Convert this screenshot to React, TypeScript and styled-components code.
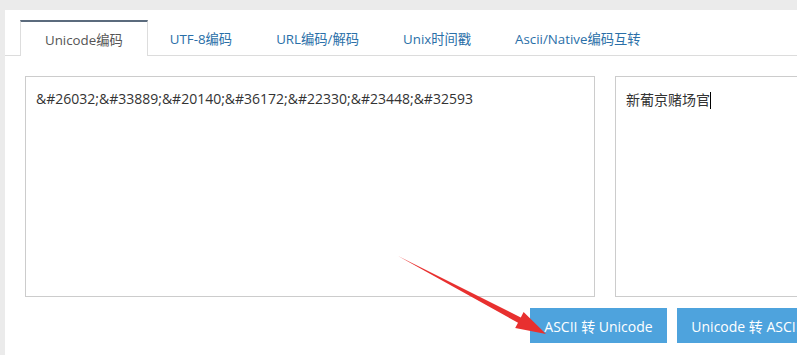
import styled, { createGlobalStyle } from "styled-components";

const GlobalStyle = createGlobalStyle`
  html, body {
    margin: 0;
    padding: 0;
    background: #ebebeb;
    overflow: hidden;
  }
  body {
    font-family: "Open Sans", "Noto Sans CJK SC", sans-serif;
  }
`

const tabs = ["Unicode编码", "UTF-8编码", "URL编码/解码", "Unix时间戳", "Ascii/Native编码互转"];

const App = () => {
  return (
    <>
      <GlobalStyle />
      <Page>
        <Panel>
          <TabBar>
            {tabs.map((t, i) => (
              <Tab key={t} active={i === 0}>{t}</Tab>
            ))}
          </TabBar>
          <Content>
            <Boxes>
              <TextBox>&amp;#26032;&amp;#33889;&amp;#20140;&amp;#36172;&amp;#22330;&amp;#23448;&amp;#32593</TextBox>
              <TextBox>新葡京赌场官<Caret /></TextBox>
            </Boxes>
            <Buttons>
              <Button>ASCII 转 Unicode</Button>
              <Button>Unicode 转 ASCII</Button>
            </Buttons>
          </Content>
        </Panel>
        <Arrow width="797" height="355" viewBox="0 0 797 355">
          <polygon
            points="398,256 520.8,317.4 523.6,312.1 546,334 515.2,328.1 518,322.8"
            fill="#e8302f"
          />
        </Arrow>
      </Page>
    </>
  )
}

export default App

const Page = styled.div`
  position: relative;
  width: 797px;
  height: 355px;
  padding: 10px 0 0 5px;
  box-sizing: border-box;
`

const Panel = styled.div`
  background: #fff;
  height: 345px;
  padding-top: 10px;
  box-sizing: border-box;
`

const TabBar = styled.div`
  display: flex;
  padding-left: 15px;
  border-bottom: 1px solid #dcdcdc;
  height: 35px;
`

const Tab = styled.div<{ active: boolean }>`
  display: flex;
  align-items: center;
  padding: 0 ${p => (p.active ? "24px" : "21px")};
  font-size: 13.3px;
  color: ${p => (p.active ? "#555" : "#2a6fa8")};
  background: #fff;
  border: 1px solid ${p => (p.active ? "#ddd" : "transparent")};
  border-top: 2px solid ${p => (p.active ? "#5b6b7d" : "transparent")};
  border-bottom: none;
  margin-bottom: ${p => (p.active ? "-1px" : "0")};
  white-space: nowrap;
`

const Content = styled.div`
  padding: 20px 0 0 20px;
`

const Boxes = styled.div`
  display: flex;
  gap: 20px;
`

const TextBox = styled.div`
  flex: none;
  width: 570px;
  height: 221px;
  box-sizing: border-box;
  border: 1px solid #ccc;
  padding: 12px 10px;
  font-size: 14px;
  color: #333;
  white-space: nowrap;
`

const Caret = styled.span`
  display: inline-block;
  width: 1px;
  height: 17px;
  background: #000;
  vertical-align: -4px;
`

const Buttons = styled.div`
  display: flex;
  gap: 10px;
  padding: 11px 0 0 505px;
`

const Button = styled.div`
  flex: none;
  height: 35px;
  padding: 0 13px;
  min-width: 111px;
  display: flex;
  align-items: center;
  justify-content: center;
  background: #4ea3dd;
  color: #fff;
  font-size: 14px;
  white-space: nowrap;
`

const Arrow = styled.svg`
  position: absolute;
  left: 0;
  top: 0;
  pointer-events: none;
`
